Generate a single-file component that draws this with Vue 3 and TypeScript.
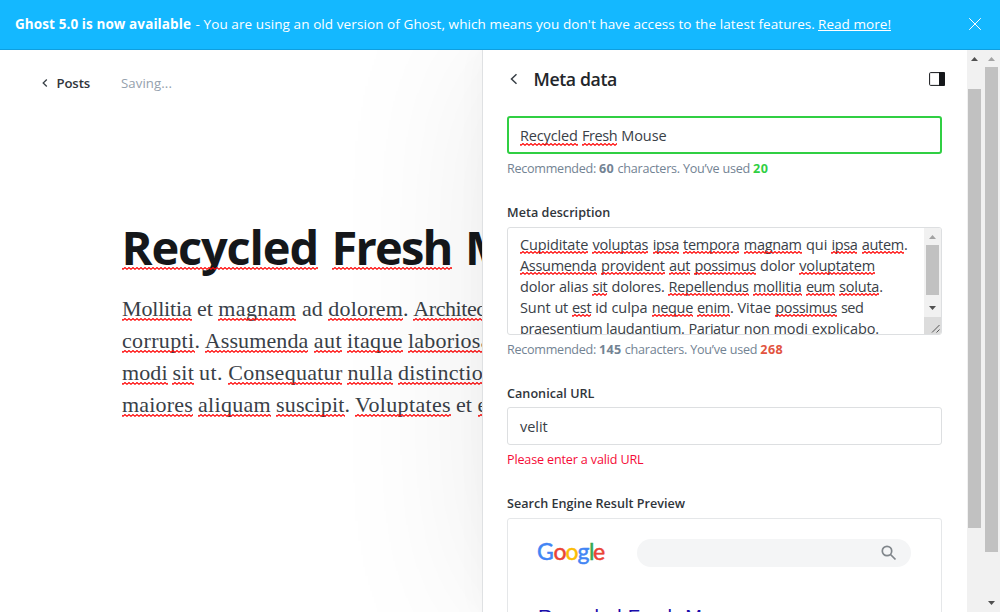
<script setup lang="ts">
import { defineComponent, h, nextTick, onMounted, ref } from 'vue'

// [text, start, end]; a leading "~" marks a word flagged by the spell checker
type Run = [string, number, number]

const RunLine = defineComponent({
  props: { runs: { type: Array as () => Run[], required: true }, origin: { type: Number, required: true } },
  setup(props) {
    const root = ref<HTMLElement | null>(null)
    onMounted(async () => {
      await nextTick()
      const items = root.value ? (Array.from(root.value.children) as HTMLElement[]) : []
      items.forEach((el, i) => {
        const [text, start, end] = props.runs[i]
        const natural = el.getBoundingClientRect().width
        const count = text.replace('~', '').length
        el.style.letterSpacing = `${(end - start - natural) / count}px`
        el.style.width = `${end - start}px`
      })
    })
    return () =>
      h(
        'span',
        { class: 'run-line', ref: root },
        props.runs.map(([text, start], i) =>
          h(
            'span',
            {
              class: ['run', { flagged: text.startsWith('~'), strong: /^\d+$/.test(text) }],
              style: { marginLeft: `${start - (i ? props.runs[i - 1][2] : props.origin)}px` },
            },
            text.replace('~', ''),
          ),
        ),
      )
  },
})

const notice: Run[] = [["- You are using an old version of Ghost, which means you don't have access to the latest features.", 195.5, 815]]
const title: Run[] = [['~Recycled', 121.5, 318], ['~Fresh', 331.5, 451.5], ['Mouse', 465, 606]]
const body: Run[][] = [
  [['~Mollitia', 122, 191.5], ['et', 197, 213], ['~magnam', 218.3, 296.3], ['ad', 302, 323], ['~dolorem', 328.3, 403], ['.', 403, 408], ['~Architecto', 413.3, 502]],
  [['~corrupti', 122, 194.5], ['.', 194.5, 199.5], ['~Assumenda', 204.7, 308.5], ['~aut', 313.7, 342], ['~itaque', 347, 403], ['~laboriosam', 408, 508]],
  [['~modi', 122, 167.7], ['~sit', 172.5, 194], ['ut.', 199, 223], ['~Consequatur', 228.3, 342.5], ['~nulla', 347.5, 393], ['~distinctio', 398, 483]],
  [['~maiores', 122, 193], ['~aliquam', 198, 271], ['~suscipit', 276, 344.5], ['.', 344.5, 349.5], ['~Voluptates', 355, 451], ['et', 456, 472], ['~eius', 477.5, 511]],
]
const metaTitle: Run[] = [['~Recycled', 520, 577.7], ['~Fresh', 582, 617.3], ['Mouse', 621.3, 666.5]]
const titleHint: Run[] = [['Recommended:', 507, 596], ['60', 599, 614], ["characters. You’ve used", 617.5, 750], ['20', 753, 768.5]]
const descHint: Run[] = [['Recommended:', 507, 596], ['145', 599, 621.5], ["characters. You’ve used", 624.7, 757.3], ['268', 760.3, 783.3]]
const description: Run[][] = [
  [['~Cupiditate', 520, 588.3], ['~voluptas', 592.5, 648.3], ['~ipsa', 652.7, 679], ['~tempora', 683, 739.5], ['~magnam', 743.8, 801.7], ['qui', 806, 827.5], ['~ipsa', 831.5, 857.5], ['~autem', 861.7, 904], ['.', 904, 907.5]],
  [['~Assumenda', 520, 596.5], ['~provident', 601, 664.7], ['~aut', 669, 690], ['~possimus', 694.5, 755.7], ['dolor', 760, 795], ['~voluptatem', 799.3, 875]],
  [['dolor', 520, 555], ['alias', 559, 588.3], ['~sit', 592.5, 607.5], ['dolores.', 611.5, 664.5], ['~Repellendus', 668.5, 748.7], ['~mollitia', 753, 801.7], ['~eum', 806, 834.6], ['~soluta', 839, 879.3], ['.', 879.3, 883]],
  [['Sunt', 520, 550.5], ['ut', 554.5, 568], ['~est', 572, 591.3], ['id', 595.3, 607.5], ['culpa', 611.5, 647.5], ['~neque', 651.7, 693], ['~enim', 697, 730], ['.', 730, 733.5], ['Vitae', 737.5, 771.2], ['~possimus', 775.3, 837], ['sed', 841, 863.5]],
  [['praesentium', 520, 602.3], ['laudantium.', 606, 684.7], ['Pariatur', 688.5, 739.5], ['non', 743.8, 769.8], ['modi', 773.5, 808], ['explicabo.', 811.8, 879]],
]
const resultTitle: Run[] = [['Recycled', 537.3, 621], ['Fresh', 627, 678], ['Mouse', 684.5, 743]]
const googleLetters = ['G', 'o', 'o', 'g', 'l', 'e']
</script>

<template>
  <div class="app">
    <header class="banner">
      <strong><RunLine :origin="15" :runs="[['Ghost 5.0 is now available', 15, 191]]" /></strong>
      <RunLine :origin="191" :runs="notice" />
      <a class="more"><RunLine :origin="815" :runs="[['Read more!', 818, 891]]" /></a>
      <svg class="close" width="14" height="14" viewBox="0 0 14 14"><path d="M1.2 1.2l11.6 11.6M12.8 1.2L1.2 12.8" /></svg>
    </header>
    <div class="workspace">
      <main class="editor">
        <nav class="crumbs">
          <svg width="6" height="8" viewBox="0 0 6 8"><path d="M4.8.5L1.2 4l3.6 3.5" /></svg>
          <span class="posts"><RunLine :origin="47" :runs="[['Posts', 56.5, 90]]" /></span>
          <span class="saving"><RunLine :origin="90" :runs="[['Saving...', 121, 172]]" /></span>
        </nav>
        <h1><RunLine :origin="122" :runs="title" /></h1>
        <div class="prose">
          <RunLine v-for="(line, i) in body" :key="i" :origin="122" :runs="line" />
        </div>
      </main>
      <aside class="panel">
        <div class="panel-head">
          <svg class="back" width="8" height="12" viewBox="0 0 8 12"><path d="M6.5 1.3L1.5 6l5 4.7" /></svg>
          <h4><RunLine :origin="518" :runs="[['Meta data', 533.5, 617]]" /></h4>
          <svg class="layout" width="16" height="14" viewBox="0 0 16 14">
            <rect x=".6" y=".6" width="14.8" height="12.8" rx="1" /><path d="M10 0h5a1 1 0 0 1 1 1v12a1 1 0 0 1-1 1h-5z" />
          </svg>
        </div>
        <div class="field focused"><RunLine :origin="509" :runs="metaTitle" /></div>
        <p class="hint good"><RunLine :origin="507" :runs="titleHint" /></p>
        <label class="desc-label"><RunLine :origin="507" :runs="[['Meta description', 507, 610.3]]" /></label>
        <div class="textarea">
          <div class="lines">
            <RunLine v-for="(line, i) in description" :key="i" :origin="508" :runs="line" />
          </div>
          <div class="inner-bar">
            <i class="arrow up muted"></i><i class="inner-thumb"></i><i class="arrow down"></i>
            <svg class="grip" width="17" height="17" viewBox="0 0 17 17"><path d="M8 15.5L15.5 8M12.5 15.5l3-3" /></svg>
          </div>
        </div>
        <p class="hint bad"><RunLine :origin="507" :runs="descHint" /></p>
        <label class="url-label"><RunLine :origin="507" :runs="[['Canonical URL', 507, 594.5]]" /></label>
        <div class="field url"><RunLine :origin="508" :runs="[['velit', 520, 547.7]]" /></div>
        <p class="hint error"><RunLine :origin="507" :runs="[['Please enter a valid URL', 507, 643.5]]" /></p>
        <label class="serp-label"><RunLine :origin="507" :runs="[['Search Engine Result Preview', 507, 685]]" /></label>
        <section class="serp">
          <div class="serp-head">
            <div class="google"><span v-for="(c, i) in googleLetters" :key="i" :class="'g' + i">{{ c }}</span></div>
            <div class="search">
              <svg width="16" height="16" viewBox="0 0 16 16"><circle cx="6" cy="6" r="4.7" /><path d="M9.5 9.5l5 5" /></svg>
            </div>
          </div>
          <div class="result"><RunLine :origin="537.3" :runs="resultTitle" /></div>
        </section>
      </aside>
      <div class="bar panel-bar"><i class="arrow up"></i><i class="thumb"></i></div>
      <div class="bar page-bar"><i class="arrow up muted"></i><i class="thumb"></i><i class="arrow down"></i></div>
    </div>
  </div>
</template>

<style>
html, body { margin: 0; overflow: hidden; }
.run-line { display: flex; width: max-content; white-space: pre; }
.run { display: block; flex: none; }
.run.flagged { position: relative; }
.run.flagged::after {
  content: ''; position: absolute; left: 0; right: 0; top: var(--wave, 18px); height: 3px;
  background: url("data:image/svg+xml,%3Csvg xmlns='http://www.w3.org/2000/svg' width='4' height='3'%3E%3Cpath d='M-1 .5L1 2.3 3 .5l2 1.8' fill='none' stroke='red' stroke-width='1.1'/%3E%3C/svg%3E") repeat-x;
}
</style>

<style scoped>
* { box-sizing: border-box; }
.app { width: 1000px; height: 612px; overflow: hidden; background: #fff; font-family: "Open Sans", "Noto Sans", sans-serif; font-size: 13.2px; color: #15171a; }
h1, h4, p { margin: 0; }
svg { display: block; flex: none; fill: none; }
.banner { height: 50px; display: flex; align-items: center; padding: 0 18px 2px 15px; background: #14b8ff; border-bottom: 1px solid #0f9fdf; color: #fff; font-size: 13.5px; line-height: 20px; }
.banner strong { font-weight: 700; }
.more { margin-left: 3px; }
.more :deep(.run) { margin-left: 0 !important; text-decoration: underline; text-underline-offset: 1px; text-decoration-thickness: 1px; text-decoration-skip-ink: none; }
.close { margin-left: auto; stroke: #fff; stroke-width: 1; }
.workspace { display: flex; height: 562px; }
.editor { width: 482px; flex: none; overflow: hidden; background: #fff; }
.crumbs { display: flex; align-items: center; height: 20px; margin: 23px 0 0 42px; line-height: 20px; }
.crumbs svg { stroke: #394047; stroke-width: 1.3; margin-right: -1px; }
.posts { font-weight: 600; color: #30353b; }
.saving { color: #95a1ad; }
h1 { --wave: 49px; margin: 125px 0 0 122px; height: 58px; line-height: 58px; font-size: 47px; font-weight: 700; }
.prose { --wave: 25px; margin: 17px 0 0 122px; line-height: 32px; font-family: "Liberation Serif", serif; font-size: 22px; color: #394047; }
.panel { position: relative; width: 485px; flex: none; height: 562px; clip-path: inset(0 0 0 -200px); padding: 0 25px 0 24px; background: #fff; border-left: 1px solid #dfe1e3; box-shadow: 0 0 150px rgba(0,0,0,.08), 0 0 30px rgba(0,0,0,.03); }
.panel-head { display: flex; align-items: center; height: 26px; margin-top: 16px; padding-left: 3px; }
.back { stroke: #394047; stroke-width: 1.5; }
h4 { font-size: 17.7px; font-weight: 600; line-height: 26px; color: #23262a; }
.layout { margin: 0 -3px 0 auto; stroke: #15171a; }
.layout path { fill: #15171a; stroke: none; }
.field { --wave: 24px; height: 38px; border: 1px solid #dddfe1; border-radius: 3px; line-height: 36px; font-size: 14.5px; color: #394047; }
.field.url { padding-top: 1px; }
.field.focused { margin-top: 24px; padding-top: 1px; border: 2px solid #30cf43; line-height: 34px; font-weight: 400; color: #394047; }
.hint { height: 18px; margin-top: 6px; line-height: 18px; font-size: 12.6px; color: #738393; }
.hint :deep(.strong) { font-weight: 700; }
.good :deep(.strong:last-child) { color: #30cf43; }
.bad :deep(.strong:last-child) { color: #e25440; }
.hint.error { color: #f50b37; margin-top: 6px; }
label { display: block; height: 18px; line-height: 18px; font-size: 12.6px; font-weight: 600; color: #30353b; }
.desc-label { margin-top: 26px; }
.textarea { --wave: 17px; display: flex; justify-content: space-between; height: 108px; margin-top: 5px; border: 1px solid #dddfe1; border-radius: 3px; overflow: hidden; font-size: 14.5px; line-height: 21px; color: #394047; }
.lines { padding-top: 6px; }
.inner-bar { position: relative; width: 17px; flex: none; background: #f1f1f1; margin-left: -17px; }
.inner-thumb { position: absolute; left: 2px; top: 17px; width: 13px; height: 50px; background: #c1c1c1; }
.grip { position: absolute; left: 0; bottom: 0; background: #dcdcdc; stroke: #555; stroke-width: 1; }
.url-label { margin: 26px 0 4px; }
.serp-label { margin: 26px 0 5px; }
.serp { height: 140px; padding: 20px 30px; border: 1px solid #e5e7e9; border-radius: 3px; }
.serp-head { display: flex; height: 28px; justify-content: space-between; }
.google { display: flex; width: 70px; height: 28px; margin-left: -1px; line-height: 25px; font-family: Lato, sans-serif; font-size: 23px; font-weight: 400; }
.google span { width: 12px; flex: none; -webkit-text-stroke: .5px currentColor; }
.google .g0 { width: 16.5px; color: #4285f4; }
.google .g1 { color: #ea4335; }
.google .g2 { color: #fbbc05; }
.google .g3 { width: 11.5px; color: #4285f4; }
.google .g4 { width: 4px; color: #34a853; }
.google .g5 { color: #ea4335; }
.search { width: 274px; height: 28px; border-radius: 14px; background: #f4f5f6; padding: 6px 14px; display: flex; justify-content: flex-end; }
.search svg { stroke: #80868b; stroke-width: 1.7; }
.result { margin-top: 37px; font-family: "Liberation Sans", Arial, sans-serif; font-size: 20px; line-height: 26px; color: #1a0dab; }
.bar { position: relative; flex: none; height: 562px; background: #f1f1f1; }
.panel-bar { width: 17px; }
.page-bar { width: 16px; }
.thumb { position: absolute; left: 1px; width: 13px; background: #c1c1c1; }
.panel-bar .thumb { top: 39px; height: 439px; }
.page-bar .thumb { top: 17px; height: 485px; }
.arrow { position: absolute; left: 4px; width: 7px; height: 4px; background: #505050; clip-path: polygon(50% 0, 100% 100%, 0 100%); top: 7px; }
.arrow.down { clip-path: polygon(0 0, 100% 0, 50% 100%); top: auto; bottom: 7px; }
.arrow.muted { background: #a3a3a3; }
.inner-bar .arrow { left: 5px; }
.inner-bar .arrow.down { bottom: 24px; }
</style>
